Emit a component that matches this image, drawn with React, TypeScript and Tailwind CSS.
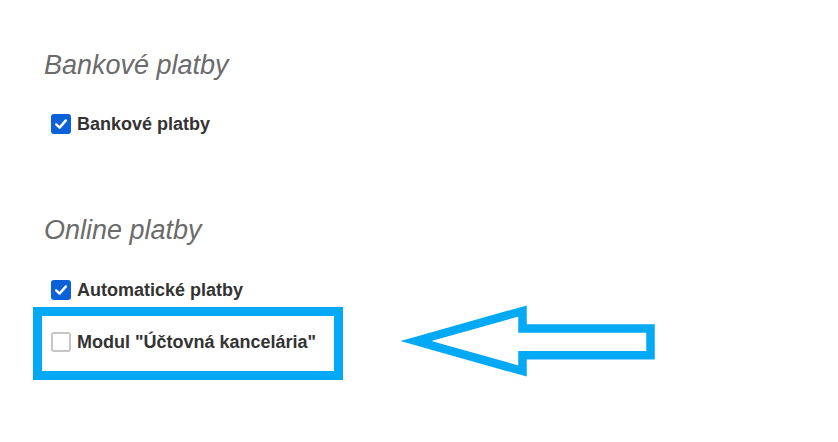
import React from 'react';

function Box({ checked }: { checked: boolean }) {
    if (checked) {
        return (
            <span className="w-[20px] h-[20px] rounded-[3px] bg-[#0b62d8] flex items-center justify-center shrink-0">
                <svg width="14" height="14" viewBox="0 0 14 14">
                    <path d="M2.2 7.4 L5.6 10.6 L11.9 3.4" fill="none" stroke="#fff" strokeWidth="2.4" strokeLinecap="round" strokeLinejoin="round" />
                </svg>
            </span>
        );
    }
    return <span className="w-[20px] h-[20px] rounded-[3px] border-2 border-[#c6c6c6] bg-white shrink-0" />;
}

function Row({ label, checked }: { label: string; checked: boolean }) {
    return (
        <label className="flex items-center gap-[6px] h-[24px]">
            <Box checked={checked} />
            <span className="text-[18px] leading-[24px] font-bold text-[#333]">{label}</span>
        </label>
    );
}

export default function App() {
    return (
        <div className="w-[838px] h-[442px] bg-white overflow-hidden pl-[33px] pt-[49px]" style={{ fontFamily: '"Liberation Sans", Arial, sans-serif' }}>
            {/* Bankové platby */}
            <h2 className="ml-[11px] text-[27px] leading-[32px] italic text-[#6b6b6b]">Bankové platby</h2>
            <div className="mt-[31px] pl-[18px]">
                <Row label="Bankové platby" checked />
            </div>

            {/* Online platby */}
            <h2 className="mt-[78px] ml-[11px] text-[27px] leading-[32px] italic text-[#6b6b6b]">Online platby</h2>
            <div className="mt-[32px] pl-[18px]">
                <Row label="Automatické platby" checked />
            </div>

            <div className="flex items-start mt-[5px]">
                <div className="w-[310px] border-[9px] border-[#03a9f4] pl-[9px] pt-[14px] pb-[17px]">
                    <Row label={'Modul "Účtovná kancelária"'} checked={false} />
                </div>
                <svg width="264" height="84" viewBox="396 300 264 84" className="ml-[53px] mt-[-7px]">
                    <polygon
                        points="416,341 522.5,311 522.5,328.5 650.5,328.5 650.5,355.3 522.5,355.3 522.5,371"
                        fill="none"
                        stroke="#03a9f4"
                        strokeWidth="8.5"
                        strokeMiterlimit="10"
                    />
                </svg>
            </div>
        </div>
    );
}
